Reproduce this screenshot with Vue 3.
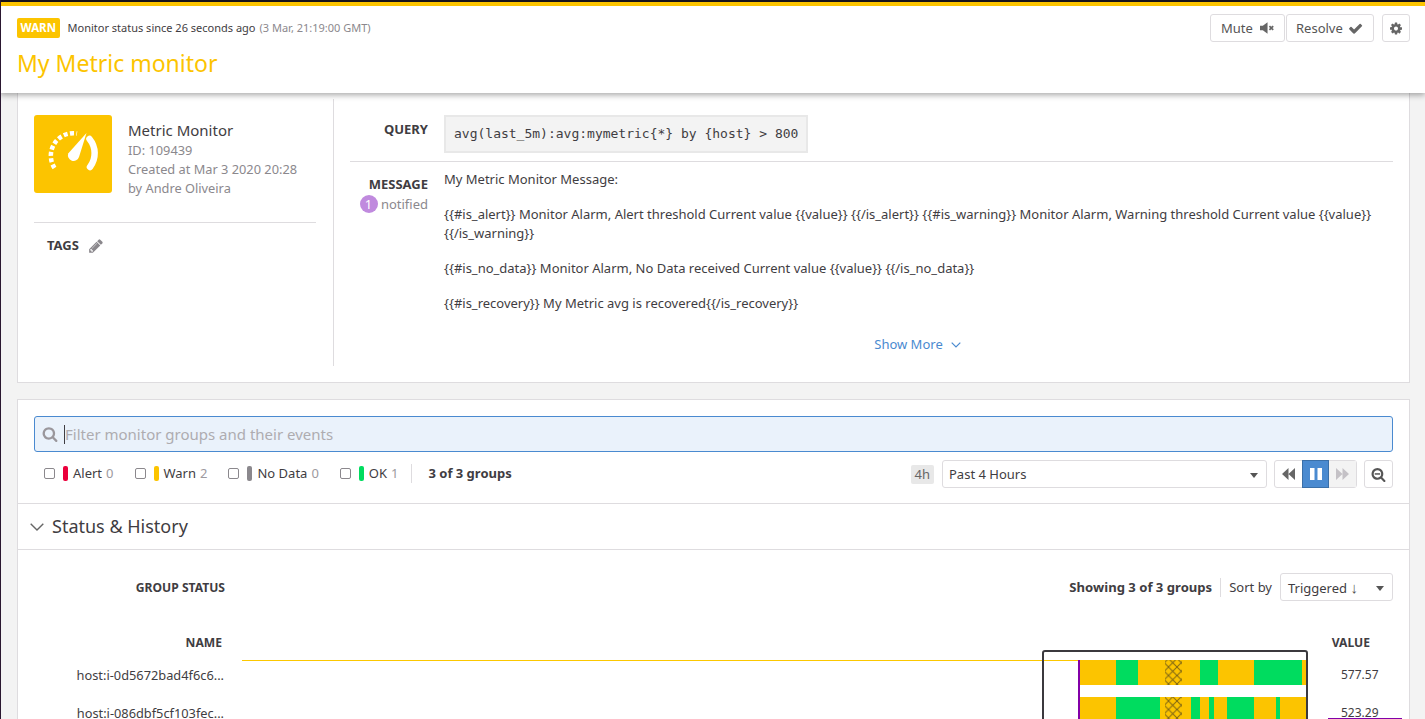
<template>
  <div class="page">
    <header class="top">
      <div class="top__left">
        <div class="status">
          <span class="badge">WARN</span>
          <span class="status__text">Monitor status since 26 seconds ago</span>
          <span class="status__time">(3 Mar, 21:19:00 GMT)</span>
        </div>
        <h1 class="top__title">My Metric monitor</h1>
      </div>
      <div class="top__actions">
        <button class="btn btn--mute">
          Mute
          <svg class="ico" width="15" height="14" viewBox="0 0 15 14"><path d="M0 4.500h3L8 1v12L3 9.500H0z" fill="#666" /><path d="M10 5l4 4M14 5l-4 4" stroke="#666" stroke-width="1.800" /></svg>
        </button>
        <button class="btn btn--resolve">
          Resolve
          <svg class="ico" width="17" height="17" viewBox="0 0 1792 1792"><path :d="icons.check" fill="#666" /></svg>
        </button>
        <button class="btn btn--gear">
          <svg width="15" height="15" viewBox="0 0 1792 1792"><path :d="icons.cog" fill="#666" /></svg>
        </button>
      </div>
    </header>

    <main class="content">
      <section class="panel summary">
        <aside class="side">
          <div class="side__head">
            <div class="side__icon">
              <svg width="78" height="78" viewBox="0 0 78 78" fill="none">
                <path d="M20.500 53A22.500 22.500 0 0 1 43 18.500" stroke="#fff" stroke-width="4.500" stroke-dasharray="4 2.400" />
                <path d="M56 52A22.500 22.500 0 0 0 55.500 24" stroke="#fff" stroke-width="6.500" stroke-linecap="round" />
                <path d="M52.500 18L45 42a5.500 5.500 0 0 1-10.800-3.500z" fill="#fff" />
              </svg>
            </div>
            <div class="side__meta">
              <div class="side__name">Metric Monitor</div>
              <div>ID: 109439</div>
              <div>Created at Mar 3 2020 20:28</div>
              <div>by Andre Oliveira</div>
            </div>
          </div>
          <div class="tags">
            <span class="label label--big">TAGS</span>
            <svg width="16" height="16" viewBox="0 0 1792 1792"><path :d="icons.pencil" fill="#8a878c" /></svg>
          </div>
        </aside>

        <div class="detail">
          <div class="query">
            <div class="detail__label label label--big">QUERY</div>
            <code class="query__code">avg(last_5m):avg:mymetric{*} by {host} &gt; 800</code>
          </div>
          <div class="message">
            <div class="detail__label">
              <div class="label label--big">MESSAGE</div>
              <div class="notified"><span class="notified__count">1</span> notified</div>
            </div>
            <div class="message__body">
              <p>My Metric Monitor Message:</p>
              <p>{{ text.alert }}</p>
              <p>{{ text.noData }}</p>
              <p>{{ text.recovery }}</p>
            </div>
          </div>
          <div class="more">
            <span>Show More</span>
            <svg width="10" height="6" viewBox="0 0 10 6" fill="none"><path d="M.7.7L5 5l4.300-4.300" stroke="#4a8ad0" stroke-width="1.200" /></svg>
          </div>
        </div>
      </section>

      <section class="panel groups">
        <div class="filters">
          <div class="search">
            <svg class="search__icon" width="16" height="16" viewBox="0 0 1792 1792"><path :d="icons.search" fill="#9a979c" /></svg>
            <span class="search__caret"></span>
            <span class="search__text">Filter monitor groups and their events</span>
          </div>
          <div class="toolbar">
            <div class="checks">
              <label v-for="c in checks" :key="c.name" class="check">
                <input type="checkbox" class="check__box" />
                <span class="check__bar" :style="{ background: c.color }"></span>
                <span>{{ c.name }}</span>
                <span class="check__count">{{ c.count }}</span>
              </label>
              <span class="checks__total">3 of 3 groups</span>
            </div>
            <div class="time">
              <span class="time__tag">4h</span>
              <div class="select select--time">Past 4 Hours<span class="caret"></span></div>
              <div class="pager">
                <span class="pager__btn">
                  <svg width="13" height="12" viewBox="0 0 13 12"><path d="M6.500 0v12L0 6zM13 0v12L6.500 6z" fill="#666" /></svg>
                </span>
                <span class="pager__btn pager__btn--on">
                  <svg width="12" height="12" viewBox="0 0 12 12"><path d="M0 0h4.500v12H0zM7.500 0H12v12H7.500z" fill="#fff" /></svg>
                </span>
                <span class="pager__btn pager__btn--off">
                  <svg width="13" height="12" viewBox="0 0 13 12"><path d="M0 0v12l6.500-6zM6.500 0v12L13 6z" fill="#c4c1c6" /></svg>
                </span>
              </div>
              <span class="zoom">
                <svg width="15" height="15" viewBox="0 0 1792 1792"><path :d="icons.search" fill="#555" /><path d="M450 740h640v180H450z" fill="#555" /></svg>
              </span>
            </div>
          </div>
        </div>

        <h2 class="section">
          <svg width="14" height="8" viewBox="0 0 14 8" fill="none"><path d="M.7.7L7 7 13.300.7" stroke="#666" stroke-width="1.400" /></svg>
          Status &amp; History
        </h2>

        <div class="status-body">
          <div class="status-head">
            <div class="label status-head__title">GROUP STATUS</div>
            <div class="status-head__right">
              <strong class="status-head__count">Showing 3 of 3 groups</strong>
              <span class="status-head__sort">Sort by</span>
              <div class="select select--sort">Triggered <span class="arrow">↓</span><span class="caret"></span></div>
            </div>
          </div>

          <div class="cols label">
            <div class="cols__name">NAME</div>
            <div class="cols__value">VALUE</div>
          </div>

          <div class="rows">
            <div class="names">
              <div v-for="r in rows" :key="r.name" class="names__row">{{ r.name }}</div>
            </div>
            <svg class="chart" width="1067" height="80" viewBox="0 0 1067 80">
              <defs>
                <pattern id="hatch" width="8.500" height="8.500" patternUnits="userSpaceOnUse">
                  <path d="M0 0L8.500 8.500M8.500 0L0 8.500" stroke="#7d6414" stroke-width="1" />
                </pattern>
              </defs>
              <rect y="10" width="836" height="1" fill="#fcc800" />
              <g v-for="r in rows" :key="r.name">
                <rect
                  v-for="s in r.segments"
                  :key="s[0]"
                  :x="s[0] - 242"
                  :y="r.top"
                  :width="s[1] - s[0]"
                  :height="r.height"
                  :fill="s[2] ? '#00dc5f' : '#fcc400'"
                />
                <rect x="923" :y="r.top" width="17" :height="r.height" fill="url(#hatch)" />
              </g>
              <rect x="836" y="10" width="2" height="70" fill="#8200a8" />
              <rect x="801" y="1" width="264" height="90" rx="2" fill="none" stroke="#3b393e" stroke-width="2" />
            </svg>
            <div class="values">
              <div v-for="r in rows" :key="r.name" class="values__row">
                {{ r.value }}
                <span v-if="r.marked" class="values__mark"></span>
              </div>
            </div>
          </div>
        </div>
      </section>
    </main>
  </div>
</template>

<script setup>
const icons = {
  check: 'M1671 566q0 40-28 68l-724 724-136 136q-28 28-68 28t-68-28l-136-136-362-362q-28-28-28-68t28-68l136-136q28-28 68-28t68 28l294 295 656-657q28-28 68-28t68 28l136 136q28 28 28 68z',
  cog: 'M1152 896q0-106-75-181t-181-75-181 75-75 181 75 181 181 75 181-75 75-181zm512-109v222q0 12-8 23t-20 13l-185 28q-19 54-39 91 35 50 107 138 10 12 10 25t-9 23q-27 37-99 108t-94 71q-12 0-26-9l-138-108q-44 23-91 38-16 136-29 186-7 28-36 28h-222q-14 0-24.500-8.500t-11.500-21.500l-28-184q-49-16-90-37l-141 107q-10 9-25 9-14 0-25-11-126-114-165-168-7-10-7-23 0-12 8-23 15-21 51-66.500t54-70.500q-27-50-41-99l-183-27q-13-2-21-12.500t-8-23.500v-222q0-12 8-23t19-13l186-28q14-46 39-92-40-57-107-138-10-12-10-24 0-10 9-23 26-36 98.500-107.500t94.500-71.500q13 0 26 10l138 107q44-23 91-38 16-136 29-186 7-28 36-28h222q14 0 24.500 8.500t11.500 21.500l28 184q49 16 90 37l142-107q9-9 24-9 13 0 25 10 129 119 165 170 7 8 7 22 0 12-8 23-15 21-51 66.500t-54 70.500q26 50 41 98l183 28q13 2 21 12.500t8 23.500z',
  pencil: 'M491 1536l91-91-235-235-91 91v107h128v128h107zm523-928q0-22-22-22-10 0-17 7l-542 542q-7 7-7 17 0 22 22 22 10 0 17-7l542-542q7-7 7-17zm-54-192l416 416-832 832h-416v-416zm683 96q0 53-37 90l-166 166-416-416 166-165q36-38 90-38 53 0 91 38l235 234q37 39 37 91z',
  search: 'M1216 832q0-185-131.500-316.500t-316.500-131.500-316.500 131.500-131.500 316.500 131.500 316.500 316.500 131.500 316.500-131.500 131.500-316.500zm512 832q0 52-38 90t-90 38q-54 0-90-38l-343-342q-179 124-399 124-143 0-273.500-55.500t-225-150-150-225-55.500-273.500 55.500-273.500 150-225 225-150 273.500-55.500 273.500 55.500 225 150 150 225 55.500 273.500q0 220-124 399l343 343q37 37 37 90z',
}

const text = {
  alert: '{{#is_alert}} Monitor Alarm, Alert threshold Current value {{value}} {{/is_alert}} {{#is_warning}} Monitor Alarm, Warning threshold Current value {{value}} {{/is_warning}}',
  noData: '{{#is_no_data}} Monitor Alarm, No Data received Current value {{value}} {{/is_no_data}}',
  recovery: '{{#is_recovery}} My Metric avg is recovered{{/is_recovery}}',
}

const checks = [
  { name: 'Alert', count: 0, color: '#eb003c' },
  { name: 'Warn', count: 2, color: '#fcc400' },
  { name: 'No Data', count: 0, color: '#8b888d' },
  { name: 'OK', count: 1, color: '#00dc5f' },
]

// x start, x end, is ok (page coordinates of the timeline)
const rows = [
  {
    name: 'host:i-0d5672bad4f6c6...',
    value: '577.57',
    top: 10,
    height: 25,
    segments: [
      [1080, 1116, 0], [1116, 1138, 1], [1138, 1200, 0], [1200, 1218, 1],
      [1218, 1254, 0], [1254, 1302, 1], [1302, 1307, 0],
    ],
  },
  {
    name: 'host:i-086dbf5cf103fec...',
    value: '523.29',
    top: 47,
    height: 33,
    marked: true,
    segments: [
      [1080, 1116, 0], [1116, 1160, 1], [1160, 1191, 0], [1191, 1200, 1],
      [1200, 1209, 0], [1209, 1214, 1], [1214, 1227, 0], [1227, 1254, 1],
      [1254, 1276, 0], [1276, 1280, 1], [1280, 1307, 0],
    ],
  },
]
</script>

<style>
html, body { margin: 0; height: 719px; overflow: hidden; background: #f3f3f3; }
</style>

<style scoped>
.page {
  height: 719px;
  overflow: hidden;
  border-left: 1px solid #2a1730;
  box-sizing: border-box;
  font-family: "Noto Sans", sans-serif;
  font-size: 13px;
  line-height: 19px;
  color: #3f3d42;
}

.top {
  position: relative;
  z-index: 2;
  height: 93px;
  box-sizing: border-box;
  margin-left: -1px;
  padding: 12px 15px 0 17px;
  display: flex;
  justify-content: space-between;
  align-items: flex-start;
  background: #fff;
  border-top: 6px solid #fcc400;
  box-shadow: 0 2px 6px rgba(0, 0, 0, .35);
}
.top::before {
  content: "";
  position: absolute;
  left: 0;
  right: 0;
  top: -6px;
  height: 2px;
  background: #17131a;
}
.status { display: flex; align-items: center; height: 20px; font-size: 11px; }
.badge {
  background: #fcc400;
  color: #fff;
  font-size: 11.500px;
  font-weight: 700;
  line-height: 20px;
  padding: 0 3.500px;
  border-radius: 2px;
  margin-right: 8px;
}
.status__text { font-size: 11px; position: relative; top: -1px; }
.status__time { font-size: 11px; color: #8b888d; margin-left: 4px; position: relative; top: -1px; }
.top__title {
  margin: 9px 0 0;
  font-size: 23px;
  line-height: 33px;
  font-weight: 400;
  color: #fcc400;
}
.top__actions { display: flex; margin-top: -4px; }
.btn {
  height: 28px;
  box-sizing: border-box;
  display: flex;
  align-items: center;
  gap: 7px;
  padding: 0 10px;
  background: #fff;
  border: 1px solid #dedcdf;
  border-radius: 3px;
  font: 13px "Noto Sans", sans-serif;
  color: #555;
}
.btn--mute { width: 75px; }
.btn--resolve { width: 88px; margin-left: 1px; gap: 5px; padding-left: 9px; }
.btn--gear { width: 28px; padding: 0 6px; margin-left: 8px; }

.content { padding-left: 16px; width: 1393px; }
.panel { background: #fff; border: 1px solid #dedcdf; box-sizing: border-box; }
.label { font-weight: 700; font-size: 12.100px; color: #3f3d42; }
.label--big { font-size: 13px; }

.summary {
  display: flex;
  height: 290px;
  border-top: 0;
  padding-top: 6px;
}
.side { width: 316px; height: 267px; box-sizing: border-box; padding: 16px 17px 0 16px; border-right: 1px solid #dedcdf; }
.side__head { display: flex; gap: 16px; height: 108px; border-bottom: 1px solid #dedcdf; box-sizing: border-box; }
.side__icon { width: 78px; height: 78px; background: #fcc400; border-radius: 3px; }
.side__meta { padding-top: 5px; font-size: 12.800px; color: #8b888d; }
.side__name { font-size: 15px; line-height: 21px; color: #3f3d42; }
.tags { display: flex; align-items: center; gap: 9px; padding: 13px 0 0 13px; }

.detail { width: 1075px; box-sizing: border-box; padding: 16px 16px 0; }
.detail__label { width: 78px; text-align: right; flex: none; }
.query { display: flex; gap: 16px; height: 47px; border-bottom: 1px solid #dedcdf; box-sizing: border-box; }
.query .detail__label { padding-top: 5px; }
.query__code {
  height: 38px;
  box-sizing: border-box;
  padding: 0 8px;
  line-height: 34px;
  background: #f3f3f3;
  border: 2px solid #e8e8e8;
  font-family: "DejaVu Sans Mono", monospace;
  font-size: 13px;
  color: #3f3d42;
}
.message { display: flex; gap: 16px; padding-top: 8px; height: 166px; box-sizing: border-box; }
.message .detail__label { padding-top: 5px; }
.notified { color: #8b888d; margin-top: 1px; margin-left: -14px; white-space: nowrap; }
.notified__count {
  display: inline-block;
  width: 18px;
  height: 18px;
  line-height: 18px;
  border-radius: 50%;
  background: #c08ade;
  color: #fff;
  text-align: center;
}
.message__body p { margin: 0 0 16px; }
.more { display: flex; justify-content: center; align-items: center; gap: 8px; color: #4a8ad0; margin-top: 7px; padding-left: 92px; }

.groups { margin-top: 16px; height: 330px; }
.filters { height: 104px; box-sizing: border-box; padding: 16px 16px 0; border-bottom: 1px solid #dedcdf; }
.search {
  height: 36px;
  box-sizing: border-box;
  display: flex;
  align-items: center;
  padding-left: 7px;
  background: #eaf2fb;
  border: 1px solid #4a8ad0;
  border-radius: 3px;
  font-size: 15px;
  color: #aeacb0;
}
.search__icon { margin-right: 6px; }
.search__caret { width: 1px; height: 19px; background: #3f3d42; }
.toolbar { display: flex; justify-content: space-between; align-items: center; margin-top: 8px; height: 28px; }
.checks { display: flex; align-items: center; padding: 0 0 2px 10px; }
.check { display: flex; align-items: center; margin-right: 21px; }
.check__box {
  appearance: none;
  margin: 0 8px 0 0;
  width: 11px;
  height: 11px;
  background: #fff;
  border: 1px solid #8b888d;
  border-radius: 2px;
}
.check__bar { width: 5px; height: 15px; border-radius: 2px; margin-right: 5px; }
.check__count { color: #9d9aa0; margin-left: 4px; }
.checks__total { font-weight: 700; border-left: 1px solid #dedcdf; padding-left: 16px; margin-left: -8px; line-height: 19px; }
.time { display: flex; align-items: center; }
.time__tag { background: #e8e8e8; border-radius: 2px; padding: 0 4px; color: #666; font-size: 13px; margin-right: 8px; }
.select {
  position: relative;
  height: 28px;
  box-sizing: border-box;
  border: 1px solid #dedcdf;
  border-radius: 3px;
  padding-left: 6px;
  line-height: 27px;
  background: #fff;
}
.select--time { width: 325px; }
.select--sort { width: 113px; padding-left: 7px; margin-left: 8px; }
.arrow { color: #555; font-size: 15px; }
.caret {
  position: absolute;
  right: 8px;
  top: 12px;
  border: 4.500px solid transparent;
  border-top: 5px solid #555;
  border-bottom: 0;
}
.pager { display: flex; margin-left: 7px; border: 1px solid #dedcdf; border-radius: 3px; height: 28px; box-sizing: border-box; }
.pager__btn { width: 27px; display: flex; align-items: center; justify-content: center; }
.pager__btn--on { background: #4a8ad0; outline: 1px solid #3a6fa8; outline-offset: -1px; height: 28px; margin-top: -1px; }
.pager__btn--off { background: #f3f3f3; }
.zoom {
  width: 29px;
  height: 28px;
  box-sizing: border-box;
  margin-left: 7px;
  border: 1px solid #dedcdf;
  border-radius: 3px;
  display: flex;
  align-items: center;
  justify-content: center;
}

.section {
  height: 46px;
  box-sizing: border-box;
  margin: 0;
  padding-left: 12px;
  display: flex;
  align-items: center;
  gap: 8px;
  font-size: 18px;
  font-weight: 400;
  border-bottom: 1px solid #dedcdf;
}

.status-body { padding-top: 23px; }
.status-head { display: flex; justify-content: space-between; align-items: center; height: 28px; padding-right: 16px; }
.status-head__title { width: 207px; text-align: right; }
.status-head__right { display: flex; align-items: center; }
.status-head__count { font-weight: 700; font-size: 13.100px; padding-right: 8px; border-right: 1px solid #dedcdf; margin-right: 8px; }
.cols { display: flex; justify-content: space-between; margin-top: 32px; height: 19px; padding: 0 39px 0 0; }
.cols__name { width: 204px; text-align: right; }

.rows { display: flex; margin-top: -2px; height: 80px; overflow: hidden; }
.names { width: 224px; flex: none; padding-top: 6px; text-align: right; padding-right: 18px; box-sizing: border-box; }
.names__row { height: 38px; line-height: 38px; font-size: 12.800px; white-space: nowrap; }
.chart { flex: none; }
.values { flex: none; padding: 6px 0 0 32px; font-size: 12px; }
.values__row { position: relative; height: 38px; line-height: 38px; white-space: nowrap; }
.values__mark {
  position: absolute;
  left: -13px;
  top: 24px;
  width: 74px;
  height: 1px;
  background: #8200a8;
}
</style>
